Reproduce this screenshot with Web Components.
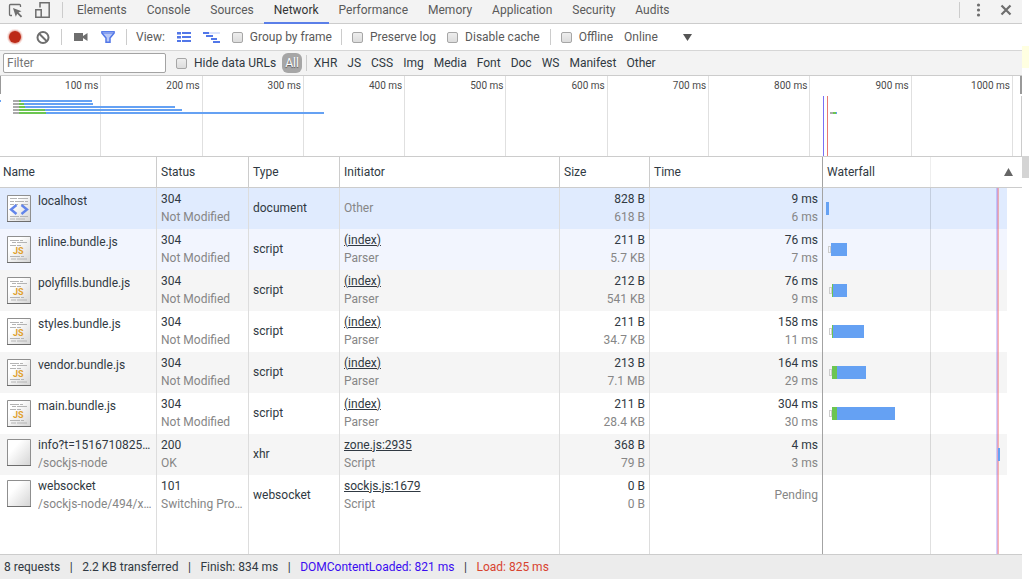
<!DOCTYPE html>
<html lang="en">
<head>
<meta charset="utf-8">
<title>Developer Tools</title>
<style>
  html, body { margin: 0; height: 100%; }
  body {
    font: 12px/18px Roboto, "Liberation Sans", sans-serif;
    color: #303942;
    background: #fff;
    --line: #ccc;
    --bar: #f3f3f3;
    --dim: #5a5a5a;
    --accent: #5277e8;
  }
</style>
</head>
<body>

<template id="dev-tools">
  <style>
    :host {
      display: grid;
      grid-template-columns: minmax(0, 1fr) 7px;
      height: 100vh;
      overflow: hidden;
    }
    main { display: flex; flex-direction: column; min-width: 0; }
    network-table { flex: 1; }
    aside { display: flex; flex-direction: column; gap: 88px; padding-top: 46px; }
    .note { height: 22px; background: #ffffe1; }
    .thumb { height: 22px; background: #d4d4d4; }
    .sep { width: 4px; text-align: center; }
    .dom { color: #3a0df0; }
    .load { color: #d8432f; }
  </style>
  <main>
    <tab-bar>
      <dev-tab>Elements</dev-tab>
      <dev-tab>Console</dev-tab>
      <dev-tab>Sources</dev-tab>
      <dev-tab selected>Network</dev-tab>
      <dev-tab>Performance</dev-tab>
      <dev-tab>Memory</dev-tab>
      <dev-tab>Application</dev-tab>
      <dev-tab>Security</dev-tab>
      <dev-tab>Audits</dev-tab>
    </tab-bar>
    <network-toolbar></network-toolbar>
    <filter-bar></filter-bar>
    <network-overview></network-overview>
    <network-table></network-table>
    <status-bar>
      <span>8 requests</span><span class="sep">|</span>
      <span>2.2 KB transferred</span><span class="sep">|</span>
      <span>Finish: 834 ms</span><span class="sep">|</span>
      <span class="dom">DOMContentLoaded: 821 ms</span><span class="sep">|</span>
      <span class="load">Load: 825 ms</span>
    </status-bar>
  </main>
  <aside><div class="note"></div><div class="thumb"></div></aside>
</template>

<template id="tab-bar">
  <style>
    :host {
      display: flex;
      height: 23px;
      background: var(--bar);
      border-bottom: 1px solid var(--line);
      color: var(--dim);
    }
    button {
      display: flex;
      align-items: center;
      padding: 0;
      border: 0;
      background: none;
    }
    svg { display: block; }
    .tools { display: flex; align-items: center; height: 20px; gap: 12px; padding-left: 8px; }
    nav { display: flex; flex: 1; padding-left: 4px; }
    .end { gap: 16px; padding-right: 8px; }
  </style>
  <div class="tools">
    <button aria-label="Inspect element">
      <svg width="15" height="15" viewBox="0 0 15 15"><path d="M12.5 4V2.5q0-1-1-1H2.500q-1 0-1 1v9q0 1 1 1H4" fill="none" stroke="#6e6e6e" stroke-width="1.300"/><path d="M5 5l8.500 3.200-3 1.300 3.700 3.800-1.300 1.200-3.700-3.800-1.400 3z" fill="#6e6e6e"/></svg>
    </button>
    <button aria-label="Toggle device toolbar">
      <svg width="15" height="16" viewBox="0 0 15 16"><path d="M5 5.500V.8h9.200v14.400H6.500" fill="none" stroke="#6e6e6e" stroke-width="1.500"/><path d="M.8 7.800h5.400v7.400H.8z" fill="none" stroke="#6e6e6e" stroke-width="1.500"/></svg>
    </button>
    <tool-sep></tool-sep>
  </div>
  <nav><slot></slot></nav>
  <div class="tools end">
    <tool-sep></tool-sep>
    <button aria-label="Customize">
      <svg width="6" height="14" viewBox="0 0 6 14" fill="#6e6e6e"><circle cx="2.500" cy="2" r="1.600"/><circle cx="2.500" cy="7" r="1.600"/><circle cx="2.500" cy="12" r="1.600"/></svg>
    </button>
    <button aria-label="Close">
      <svg width="16" height="12" viewBox="0 0 16 12"><path d="M3.500 1.500l9 9m0-9l-9 9" stroke="#6e6e6e" stroke-width="2.200"/></svg>
    </button>
  </div>
</template>

<template id="dev-tab">
  <style>
    :host { display: block; }
    button {
      height: 24px;
      padding: 0 10px 4px;
      border: 0;
      background: none;
      color: inherit;
      font: inherit;
    }
    :host([selected]) button {
      color: #333;
      border-bottom: 2px solid #5b7fe8;
      padding-bottom: 2px;
    }
  </style>
  <button><slot></slot></button>
</template>

<template id="tool-sep">
  <style>
    :host { display: block; width: 1px; height: 16px; background: var(--line); }
  </style>
</template>

<template id="tool-check">
  <style>
    :host { display: block; }
    label { display: flex; align-items: center; gap: 7px; }
    input {
      box-sizing: border-box;
      appearance: none;
      width: 11px;
      height: 11px;
      margin: 0;
      border: 1px solid #a6a6a6;
      border-radius: 2px;
      background: linear-gradient(#eee, #dcdcdc);
    }
  </style>
  <label><input type="checkbox"><span><slot></slot></span></label>
</template>

<template id="network-toolbar">
  <style>
    :host {
      display: flex;
      align-items: center;
      height: 26px;
      border-bottom: 1px solid #d6d6d6;
      color: var(--dim);
    }
    button { padding: 0; border: 0; background: none; }
    svg { display: block; }
    .group { display: flex; align-items: center; padding: 0 10px; }
    .record { gap: 13px; padding: 0 11px 0 7px; }
    .capture { gap: 13px; padding: 0 11px 0 12px; }
    .view { gap: 12px; padding: 0 9px; }
    .checks { gap: 11px; }
    .last { padding: 0 10px; }
    .throttle { display: flex; align-items: center; }
    select {
      appearance: none;
      width: 59px;
      padding: 0;
      border: 0;
      background: none;
      color: inherit;
      font: inherit;
    }
  </style>
  <div class="group record">
    <button aria-label="Record">
      <svg width="16" height="16" viewBox="0 0 16 16"><circle cx="8" cy="8" r="8" fill="#f9e6e3"/><circle cx="8" cy="8" r="7" fill="#eab4ac"/><circle cx="8" cy="8" r="6" fill="#bc2a17"/></svg>
    </button>
    <button aria-label="Clear">
      <svg width="14" height="14" viewBox="0 0 14 14"><circle cx="7" cy="7.500" r="5.500" fill="none" stroke="#6e6e6e" stroke-width="2"/><path d="M3 3.500l8 8" stroke="#6e6e6e" stroke-width="2"/></svg>
    </button>
  </div>
  <tool-sep></tool-sep>
  <div class="group capture">
    <button aria-label="Capture screenshots">
      <svg width="14" height="8" viewBox="0 0 14 8"><path d="M0 0h9v3l4.500-3v8L9 5v3H0z" fill="#6e6e6e"/></svg>
    </button>
    <button aria-label="Filter">
      <svg width="14" height="12" viewBox="0 0 14 12"><path d="M1 .8h12v1.500L9 7v4.200H5V7L1 2.300z" fill="#b9c8f6" stroke="#5277e8" stroke-width="1.500"/><path d="M1 .8h12v1.200H1z" fill="#e9eefc" stroke="#5277e8"/></svg>
    </button>
  </div>
  <tool-sep></tool-sep>
  <div class="group view">
    <span>View:</span>
    <button aria-label="Use large request rows">
      <svg width="14" height="10" viewBox="0 0 14 10" fill="#5277e8"><path d="M0 0h4v2.500H0zM5 0h9v2H5zM0 4h4v2.500H0zM5 4h9v2H5zM0 8h4v2H0zM5 8h9v2H5z"/></svg>
    </button>
    <button aria-label="Show overview">
      <svg width="17" height="12" viewBox="0 0 17 12"><path d="M6 1h11v2H6z" fill="#dbe3fb"/><path d="M0 1h6v2H0zM3 4h7v2H3zM8 7h6v2H8zM10 10h7v2h-7z" fill="#5277e8"/></svg>
    </button>
    <tool-check>Group by frame</tool-check>
  </div>
  <tool-sep></tool-sep>
  <div class="group checks">
    <tool-check>Preserve log</tool-check>
    <tool-check>Disable cache</tool-check>
  </div>
  <tool-sep></tool-sep>
  <div class="group checks last">
    <tool-check>Offline</tool-check>
    <div class="throttle">
      <select aria-label="Throttling"><option>Online</option></select>
      <svg width="10" height="7" viewBox="0 0 10 7"><path d="M0 0h9L4.500 7z" fill="#555"/></svg>
    </div>
  </div>
</template>

<template id="filter-bar">
  <style>
    :host {
      display: flex;
      align-items: center;
      height: 24px;
      padding-left: 3px;
      background: var(--bar);
      border-bottom: 1px solid var(--line);
    }
    input {
      box-sizing: border-box;
      width: 163px;
      height: 20px;
      margin: 0 10px 0 0;
      padding: 0 3px;
      border: 1px solid #a3a3a3;
      border-radius: 2px;
      background: #fff;
      font: inherit;
    }
    input::placeholder { color: #757575; }
    .types { display: flex; align-items: center; margin-left: 6px; }
    button {
      height: 20px;
      padding: 0 5px;
      border: 0;
      border-radius: 6px;
      background: none;
      color: inherit;
      font: inherit;
    }
    .all {
      padding: 0 3px;
      background: #a6a6a6;
      color: #fff;
      text-shadow: 0 1px 1px #555;
    }
    tool-sep { margin: 0 2px 0 4px; }
  </style>
  <input type="text" placeholder="Filter" aria-label="Filter">
  <tool-check>Hide data URLs</tool-check>
  <div class="types">
    <button class="all">All</button>
    <tool-sep></tool-sep>
    <button>XHR</button>
    <button>JS</button>
    <button>CSS</button>
    <button>Img</button>
    <button>Media</button>
    <button>Font</button>
    <button>Doc</button>
    <button>WS</button>
    <button>Manifest</button>
    <button>Other</button>
  </div>
</template>

<template id="network-overview">
  <style>
    :host {
      display: block;
      position: relative;
      height: 80px;
      border-bottom: 1px solid var(--line);
      color: #4a4a4a;
    }
    .ruler { display: flex; height: 80px; padding-right: 9px; }
    .ruler span {
      flex: 1;
      border-right: 1px solid #e0e0e0;
      padding-right: 2px;
      text-align: right;
      font-size: 10px;
      line-height: 20px;
    }
    /* request lines are drawn over the ruler */
    svg { position: absolute; left: 0; top: 0; width: 100%; height: 80px; }
  </style>
  <div class="ruler"></div>
  <svg viewBox="0 0 1022 80" preserveAspectRatio="none" shape-rendering="crispEdges">
    <path d="M0 24h1v2H0z" fill="#65a1f3"/>
    <path d="M13 24h6v2h-6zM13 27h6v2h-6zM13 30h6v2h-6zM13 33h6v2h-6zM13 36h6v2h-6zM830 36h3v2h-3z" fill="#aaa"/>
    <path d="M19 24h2v2h-2zM19 27h5v2h-5zM19 30h6v2h-6zM19 33h26v2H19zM19 36h27v2H19zM833 36h3v2h-3z" fill="#6cc551"/>
    <path d="M21 24h71v2H21zM24 27h69v2H24zM25 30h150v2H25zM45 33h137v2H45zM46 36h278v2H46zM836 36h1v2h-1z" fill="#65a1f3"/>
    <path d="M823 20h1v60h-1z" fill="#7a70f5"/>
    <path d="M827 20h1v60h-1z" fill="#e87a72"/>
    <path d="M0 0h1v18H0zM1020 0h2v18h-2z" fill="#999"/>
    <path d="M1021 20h1v60h-1z" fill="#ccc"/>
  </svg>
</template>

<template id="network-table">
  <style>
    :host { display: block; min-height: 0; }
    table {
      width: 100%;
      height: 100%;
      table-layout: fixed;
      border-collapse: separate;
      border-spacing: 0;
    }
    th, td {
      box-sizing: border-box;
      padding: 0 4px;
      border-right: 1px solid #ddd;
      overflow: hidden;
      white-space: nowrap;
      text-overflow: ellipsis;
      text-align: left;
    }
    th {
      height: 31px;
      font-weight: normal;
      border-color: var(--line);
      border-bottom: 1px solid var(--line);
    }
    td { padding-bottom: 2px; }
    th:first-child { padding-left: 3px; }
    tr > :nth-child(6) { border-right-color: #a3a3a3; }
    tr > :last-child { border-right: 0; }
    .request { height: 41px; }
    .request:nth-child(odd) { background: #f5f5f5; }
    .request:nth-child(1) { background: #e0ebfe; }
    .request:nth-child(2) { background: #f2f5fe; }
    .num { text-align: right; }
    .name { padding: 0 4px 0 7px; }
    .file { display: flex; gap: 7px; height: 33px; padding-bottom: 4px; }
    .file.single { height: 31px; padding-top: 2px; }
    .file div { min-width: 0; }
    p { margin: 0; overflow: hidden; text-overflow: ellipsis; }
    .sub { color: #868686; }
    file-icon { padding-top: 3px; }
    a { color: inherit; }
    .sort { display: flex; justify-content: space-between; align-items: center; padding-right: 6px; }
    .wf { position: relative; padding: 0; }
    /* the scrollbar gutter stays white beside the striped rows */
    td.wf { background: linear-gradient(to left, #fff 15px, transparent 15px); }
    .wf::after, td.wf::before {
      content: "";
      position: absolute;
      top: 0;
      bottom: 0;
      left: 54%;
      width: 1px;
      background: rgba(0, 0, 0, .12);
    }
    th.wf { padding-left: 4px; }
    th.wf::after { background: #eee; }
    td.wf::before {
      left: 87%;
      width: 3px;
      background: linear-gradient(to right, rgba(90, 80, 250, .25) 1px, rgba(190, 80, 160, .5) 1px 2px, rgba(245, 110, 100, .5) 2px);
    }
    waterfall-bar { position: relative; }
  </style>
  <table>
    <colgroup>
      <col style="width: 157px"><col style="width: 92px"><col style="width: 91px">
      <col style="width: 220px"><col style="width: 90px"><col style="width: 173px"><col>
    </colgroup>
    <thead>
      <tr>
        <th>Name</th><th>Status</th><th>Type</th><th>Initiator</th><th>Size</th><th>Time</th>
        <th class="wf"><div class="sort"><span>Waterfall</span>
          <svg width="16" height="8" viewBox="0 0 16 8"><path d="M4 8h9L8.500 0z" fill="#666"/></svg></div></th>
      </tr>
    </thead>
    <tbody></tbody>
  </table>
</template>

<template id="file-icon">
  <style>
    :host { display: block; flex: none; }
    svg { display: block; }
    text { font: bold 9px Roboto, "Liberation Sans", sans-serif; }
    .js, .html { display: none; }
    :host([kind=js]) .js, :host([kind=html]) .html { display: inline; }
  </style>
  <svg width="24" height="28" viewBox="0 0 24 28">
    <defs><linearGradient id="paper" x1="0" y1="0" x2="1" y2="1"><stop offset=".3" stop-color="#fff"/><stop offset="1" stop-color="#d4d4d4"/></linearGradient></defs>
    <path d="M.5 .5h23v26H.5z" fill="url(#paper)" stroke="#8f8f8f"/>
    <path d="M0 26.500h24" stroke="#6d6d6d"/>
    <g class="html">
      <path d="M3 3.500h7m1 0h10M3 6.500h4m1 0h9m1 0h3M3 9.500h4m1 0h3m3 0h7M3 21.500h9m1 0h8M3 24h5m1 0h9" stroke="#b4b4b4"/>
      <path d="M9.500 10L4 14.500l5.500 4.500M14.500 10l5.500 4.500-5.500 4.500" fill="none" stroke="#6285ea" stroke-width="2.400"/>
    </g>
    <g class="js">
      <path d="M3 4.500h9m1 0h3M5 6.500h4m1 0h10M3 9.500h6m1 0h4M3 20.500h10m1 0h3M4 23h5m1 0h10" stroke="#b4b4b4"/>
      <text x="6" y="18" fill="#e0a12e">JS</text>
    </g>
  </svg>
</template>

<template id="waterfall-bar">
  <style>
    :host { display: flex; align-items: center; height: 13px; }
    i { display: block; height: 13px; }
    .queue { box-sizing: border-box; width: 3px; height: 7px; border: 1px solid #ccc; }
    .wait { background: #6cc551; }
    .load { background: #65a1f3; }
  </style>
  <i class="queue"></i><i class="wait"></i><i class="load"></i>
</template>

<template id="status-bar">
  <style>
    :host {
      display: flex;
      align-items: center;
      gap: 9px;
      height: 24px;
      padding: 0 4px;
      background: #ececec;
      border-top: 1px solid var(--line);
    }
  </style>
  <slot></slot>
</template>

<dev-tools></dev-tools>

<script>
  class TemplateElement extends HTMLElement {
    constructor() {
      super();
      const t = document.getElementById(this.localName);
      this.attachShadow({mode: 'open'}).appendChild(t.content.cloneNode(true));
    }
  }

  class NetworkOverview extends TemplateElement {
    connectedCallback() {
      const ruler = this.shadowRoot.querySelector('.ruler');
      for (let ms = 100; ms <= 1000; ms += 100) {
        const tick = document.createElement('span');
        tick.textContent = `${ms} ms`;
        ruler.appendChild(tick);
      }
    }
  }

  class WaterfallBar extends TemplateElement {
    connectedCallback() {
      const root = this.shadowRoot;
      const px = name => `${this.getAttribute(name) || 0}px`;
      this.style.paddingLeft = px('start');
      if (!this.hasAttribute('queued')) {
        root.querySelector('.queue').remove();
      }
      root.querySelector('.wait').style.width = px('wait');
      root.querySelector('.load').style.width = px('load');
    }
  }

  /* bar: [start, queued, wait, load] */
  const requests = [
    {icon: 'html', name: 'localhost', status: ['304', 'Not Modified'], type: 'document', from: ['', 'Other'], size: ['828 B', '618 B'], time: ['9 ms', '6 ms'], bar: [3, false, 0, 3]},
    {icon: 'js', name: 'inline.bundle.js', status: ['304', 'Not Modified'], type: 'script', from: ['(index)', 'Parser'], size: ['211 B', '5.7 KB'], time: ['76 ms', '7 ms'], bar: [5, true, 0, 16]},
    {icon: 'js', name: 'polyfills.bundle.js', status: ['304', 'Not Modified'], type: 'script', from: ['(index)', 'Parser'], size: ['212 B', '541 KB'], time: ['76 ms', '9 ms'], bar: [6, true, 1, 14]},
    {icon: 'js', name: 'styles.bundle.js', status: ['304', 'Not Modified'], type: 'script', from: ['(index)', 'Parser'], size: ['211 B', '34.7 KB'], time: ['158 ms', '11 ms'], bar: [6, true, 1, 31]},
    {icon: 'js', name: 'vendor.bundle.js', status: ['304', 'Not Modified'], type: 'script', from: ['(index)', 'Parser'], size: ['213 B', '7.1 MB'], time: ['164 ms', '29 ms'], bar: [6, true, 5, 29]},
    {icon: 'js', name: 'main.bundle.js', status: ['304', 'Not Modified'], type: 'script', from: ['(index)', 'Parser'], size: ['211 B', '28.4 KB'], time: ['304 ms', '30 ms'], bar: [6, true, 5, 58]},
    {icon: 'blank', name: 'info?t=1516710825…', path: '/sockjs-node', status: ['200', 'OK'], type: 'xhr', from: ['zone.js:2935', 'Script'], size: ['368 B', '79 B'], time: ['4 ms', '3 ms'], bar: [175, false, 0, 2]},
    {icon: 'blank', name: 'websocket', path: '/sockjs-node/494/x…', status: ['101', 'Switching Pro…'], type: 'websocket', from: ['sockjs.js:1679', 'Script'], size: ['0 B', '0 B'], time: ['', 'Pending'], bar: [0, false, 0, 0]},
  ];

  class NetworkTable extends TemplateElement {
    connectedCallback() {
      this.shadowRoot.querySelector('tbody').innerHTML =
        requests.map(r => this.row(r)).join('') + `<tr>${'<td></td>'.repeat(6)}<td class="wf"></td></tr>`;
    }

    pair([main, sub]) {
      return (main ? `<p>${main}</p>` : '') + `<p class="sub">${sub}</p>`;
    }

    row(r) {
      const [start, queued, wait, load] = r.bar;
      const from = r.from[0] ? [`<a href="#">${r.from[0]}</a>`, r.from[1]] : r.from;
      return `<tr class="request">
        <td class="name"><div class="file ${r.path ? '' : 'single'}">
          <file-icon kind="${r.icon}"></file-icon>
          <div><p>${r.name}</p>${r.path ? `<p class="sub">${r.path}</p>` : ''}</div>
        </div></td>
        <td>${this.pair(r.status)}</td>
        <td>${r.type}</td>
        <td>${this.pair(from)}</td>
        <td class="num">${this.pair(r.size)}</td>
        <td class="num">${this.pair(r.time)}</td>
        <td class="wf"><waterfall-bar start="${start}" ${queued ? 'queued' : ''} wait="${wait}" load="${load}"></waterfall-bar></td>
      </tr>`;
    }
  }

  for (const name of ['tool-sep', 'tool-check', 'dev-tab', 'tab-bar', 'network-toolbar', 'filter-bar', 'file-icon', 'status-bar']) {
    customElements.define(name, class extends TemplateElement {});
  }
  customElements.define('waterfall-bar', WaterfallBar);
  customElements.define('network-overview', NetworkOverview);
  customElements.define('network-table', NetworkTable);
  customElements.define('dev-tools', class extends TemplateElement {});
</script>
</body>
</html>
